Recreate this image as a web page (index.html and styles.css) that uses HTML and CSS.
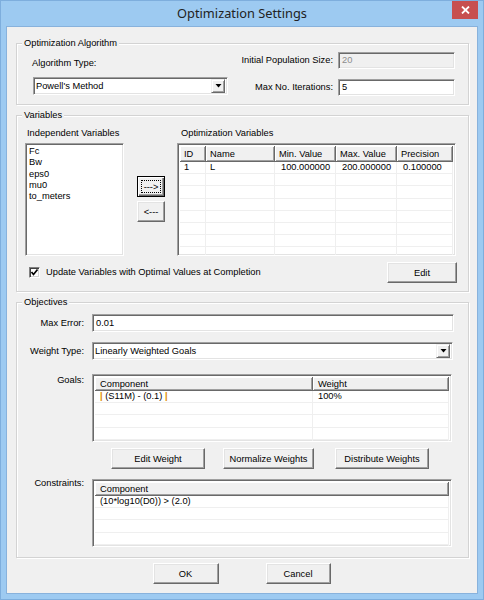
FILE: index.html
```html
<!DOCTYPE html>
<html>
<head>
<meta charset="utf-8">
<title>Optimization Settings</title>
<link rel="stylesheet" href="styles.css">
</head>
<body>
<div class="window">
  <div class="titlebar">
    <div class="title">Optimization Settings</div>
    <div class="close">
      <svg width="9" height="8" viewBox="0 0 9 8"><path d="M1 0.5 L8 7.5 M8 0.5 L1 7.5" stroke="#fff" stroke-width="1.8" fill="none"/></svg>
    </div>
  </div>
  <div class="client">
    <div class="group g-algo">
      <div class="group-title">Optimization Algorithm</div>
      <div class="algo-body">
        <div class="algo-left">
          <div class="lbl algo-type-lbl">Algorithm Type:</div>
          <div class="combo algo-combo">
            <span class="combo-text">Powell's Method</span>
            <span class="combo-btn"><svg width="7" height="4" viewBox="0 0 7 4"><polygon points="0.5,0 6.5,0 3.5,3.5" fill="#000"/></svg></span>
          </div>
        </div>
        <div class="algo-right">
          <div class="field-row"><span class="lbl">Initial Population Size:</span><div class="input disabled algo-input">20</div></div>
          <div class="field-row row2"><span class="lbl">Max No. Iterations:</span><div class="input algo-input">5</div></div>
        </div>
      </div>
    </div>

    <div class="group g-vars">
      <div class="group-title">Variables</div>
      <div class="vars-body">
        <div class="indep">
          <div class="lbl col-lbl">Independent Variables</div>
          <div class="listbox">
            <div class="li">Fc</div>
            <div class="li">Bw</div>
            <div class="li">eps0</div>
            <div class="li">mu0</div>
            <div class="li">to_meters</div>
          </div>
        </div>
        <div class="arrow-btns">
          <div class="btn arrow-btn focused"><span class="focus-rect">---&gt;</span></div>
          <div class="btn arrow-btn second">&lt;---</div>
        </div>
        <div class="optvars">
          <div class="lbl col-lbl opt-lbl">Optimization Variables</div>
          <div class="grid-table vars-table">
            <div class="thead">
              <div class="th c-id">ID</div>
              <div class="th c-name">Name</div>
              <div class="th c-min">Min. Value</div>
              <div class="th c-max">Max. Value</div>
              <div class="th c-prec">Precision</div>
            </div>
            <div class="tr">
              <div class="td c-id">1</div>
              <div class="td c-name">L</div>
              <div class="td c-min num">100.000000</div>
              <div class="td c-max num">200.000000</div>
              <div class="td c-prec num">0.100000</div>
            </div>
            <div class="tr"><div class="td c-id"></div><div class="td c-name"></div><div class="td c-min"></div><div class="td c-max"></div><div class="td c-prec"></div></div>
            <div class="tr"><div class="td c-id"></div><div class="td c-name"></div><div class="td c-min"></div><div class="td c-max"></div><div class="td c-prec"></div></div>
            <div class="tr"><div class="td c-id"></div><div class="td c-name"></div><div class="td c-min"></div><div class="td c-max"></div><div class="td c-prec"></div></div>
            <div class="tr"><div class="td c-id"></div><div class="td c-name"></div><div class="td c-min"></div><div class="td c-max"></div><div class="td c-prec"></div></div>
            <div class="tr"><div class="td c-id"></div><div class="td c-name"></div><div class="td c-min"></div><div class="td c-max"></div><div class="td c-prec"></div></div>
            <div class="tr"><div class="td c-id"></div><div class="td c-name"></div><div class="td c-min"></div><div class="td c-max"></div><div class="td c-prec"></div></div>
            <div class="tr"><div class="td c-id"></div><div class="td c-name"></div><div class="td c-min"></div><div class="td c-max"></div><div class="td c-prec"></div></div>
          </div>
        </div>
      </div>
      <div class="vars-footer">
        <div class="check">
          <span class="checkbox"><svg width="9" height="9" viewBox="0 0 9 9"><path d="M1.5 4 L3.5 6.5 L7.5 1.5" stroke="#000" stroke-width="1.7" fill="none"/></svg></span>
          <span class="check-lbl">Update Variables with Optimal Values at Completion</span>
        </div>
        <div class="btn edit-btn">Edit</div>
      </div>
    </div>

    <div class="group g-obj">
      <div class="group-title">Objectives</div>
      <div class="obj-row r-err">
        <div class="obj-lbl">Max Error:</div>
        <div class="input obj-input">0.01</div>
      </div>
      <div class="obj-row r-wt">
        <div class="obj-lbl">Weight Type:</div>
        <div class="combo obj-combo">
          <span class="combo-text">Linearly Weighted Goals</span>
          <span class="combo-btn"><svg width="7" height="4" viewBox="0 0 7 4"><polygon points="0.5,0 6.5,0 3.5,3.5" fill="#000"/></svg></span>
        </div>
      </div>
      <div class="obj-row r-goals">
        <div class="obj-lbl top-lbl">Goals:</div>
        <div class="grid-table obj-table">
          <div class="thead small">
            <div class="th c-comp">Component</div>
            <div class="th c-wt">Weight</div>
          </div>
          <div class="tr"><div class="td c-comp"><span class="pipe">|</span> (S11M) - (0.1) <span class="pipe">|</span></div><div class="td c-wt">100%</div></div>
          <div class="tr"><div class="td c-comp"></div><div class="td c-wt"></div></div>
          <div class="tr"><div class="td c-comp"></div><div class="td c-wt"></div></div>
          <div class="tr"><div class="td c-comp"></div><div class="td c-wt"></div></div>
          <div class="tr"><div class="td c-comp"></div><div class="td c-wt"></div></div>
        </div>
      </div>
      <div class="obj-row r-btns">
        <div class="obj-lbl"></div>
        <div class="weight-btns">
          <div class="btn w-edit">Edit Weight</div>
          <div class="btn w-norm">Normalize Weights</div>
          <div class="btn w-dist">Distribute Weights</div>
        </div>
      </div>
      <div class="obj-row r-cons">
        <div class="obj-lbl top-lbl cons-lbl">Constraints:</div>
        <div class="grid-table obj-table">
          <div class="thead small">
            <div class="th c-full">Component</div>
          </div>
          <div class="tr"><div class="td c-full">(10*log10(D0)) &gt; (2.0)</div></div>
          <div class="tr"><div class="td c-full"></div></div>
          <div class="tr"><div class="td c-full"></div></div>
          <div class="tr"><div class="td c-full"></div></div>
          <div class="tr"><div class="td c-full"></div></div>
        </div>
      </div>
    </div>

    <div class="dialog-btns">
      <div class="btn ok-btn">OK</div>
      <div class="btn cancel-btn">Cancel</div>
    </div>
  </div>
</div>
</body>
</html>
```

FILE: styles.css
```css
* { box-sizing: border-box; }
html, body { margin: 0; padding: 0; }
body {
  width: 484px;
  height: 600px;
  background: #9dcaf1;
  font-family: "Liberation Sans", Arial, sans-serif;
  font-size: 9.3px;
  color: #000;
  overflow: hidden;
}

.window {
  width: 484px;
  height: 600px;
  border: 1px solid #7eaedd;
  background: #9dcaf1;
  display: flex;
  flex-direction: column;
}

.titlebar {
  height: 25px;
  display: grid;
  grid-template-columns: 1fr auto 1fr;
  align-items: start;
}
.title {
  grid-column: 2;
  font-family: "Noto Sans", "Open Sans", sans-serif;
  font-size: 12.8px;
  line-height: 25px;
  color: #222;
}
.close {
  grid-column: 3;
  justify-self: end;
  margin-right: 5px;
  width: 26px;
  height: 18px;
  background: #c75050;
  display: flex;
  align-items: center;
  justify-content: center;
}

.client {
  margin: 0 5px;
  height: 568px;
  border: 1px solid #88b2dc;
  background: #f0f0f0;
  padding: 16px 8px 0 9px;
  display: flex;
  flex-direction: column;
}

.lbl { line-height: 13px; white-space: nowrap; }

/* group boxes */
.group {
  border: 1px solid #d3d3d3;
  box-shadow: inset 1px 1px 0 #fff, 1px 1px 0 #fff;
  width: 453px;
}
.group-title {
  margin: -7px 0 0 5px;
  padding: 0 2px;
  height: 13px;
  line-height: 13px;
  background: #f0f0f0;
  width: max-content;
}
.g-algo { height: 62px; }
.g-vars { height: 177px; margin-top: 10px; }
.g-obj { height: 256px; margin-top: 10px; }

/* sunken fields */
.input, .combo, .listbox, .grid-table, .checkbox {
  background: #fff;
  border: 1px solid;
  border-color: #a0a0a0 #fff #fff #a0a0a0;
  box-shadow: inset 1px 1px 0 #696969, inset -1px -1px 0 #e3e3e3;
}
.input {
  padding: 0 3px;
  line-height: 15px;
  white-space: nowrap;
}
.input.disabled { background: #f0f0f0; color: #8d8d8d; }

.combo {
  display: flex;
  align-items: center;
  padding: 2px;
  height: 18px;
}
.combo-text { flex: 1; line-height: 14px; padding-left: 0; }
.combo-btn {
  width: 14px;
  height: 14px;
  background: #f0f0f0;
  border: 1px solid;
  border-color: #f0f0f0 #696969 #696969 #f0f0f0;
  box-shadow: inset 1px 1px 0 #fff, inset -1px -1px 0 #a0a0a0;
  display: flex;
  align-items: center;
  justify-content: center;
}

/* raised buttons */
.btn {
  background: #f0f0f0;
  border: 1px solid;
  border-color: #fff #696969 #696969 #fff;
  box-shadow: inset -1px -1px 0 #a0a0a0, inset 1px 1px 0 #e3e3e3;
  height: 21px;
  display: flex;
  align-items: center;
  justify-content: center;
  white-space: nowrap;
}

/* group 1 */
.algo-body { display: flex; }
.algo-left { padding-left: 15px; }
.algo-type-lbl { margin-top: 7px; }
.algo-combo { margin-top: 7px; margin-left: 1px; width: 195px; }
.algo-right { margin-left: auto; margin-right: 13px; padding-top: 2px; }
.field-row { display: flex; align-items: center; justify-content: flex-end; }
.field-row.row2 { margin-top: 10px; }
.algo-input { width: 117px; height: 17px; margin-left: 5px; }

/* group 2 */
.vars-body { display: flex; margin-top: 5px; padding-left: 8px; }
.col-lbl { padding-left: 2px; height: 13px; }
.opt-lbl { padding-left: 4px; }
.listbox {
  width: 99px;
  height: 113px;
  margin-top: 3px;
  padding: 2px 0 0 3px;
}
.li { line-height: 11.3px; }
.arrow-btns { margin-left: 13px; padding-top: 49px; }
.arrow-btn { width: 28px; height: 21px; }
.arrow-btn.second { margin-top: 4px; }
.btn.focused {
  border-color: #000;
  box-shadow: inset 1px 1px 0 #fff, inset -1px -1px 0 #696969, inset -2px -2px 0 #a0a0a0;
}
.focus-rect {
  border: 1px dotted #000;
  width: 20px;
  height: 13px;
  display: flex;
  align-items: center;
  justify-content: center;
}
.optvars { margin-left: 12px; }
.vars-table { width: 279px; height: 113px; margin-top: 3px; }

.grid-table { padding: 2px; overflow: hidden; }
.thead { display: flex; height: 16px; }
.thead.small { height: 14px; }
.th {
  background: #f0f0f0;
  border-right: 1px solid #696969;
  border-bottom: 1px solid #696969;
  box-shadow: inset 1px 1px 0 #fff, inset -1px -1px 0 #a0a0a0;
  padding-left: 4px;
  display: flex;
  align-items: center;
  white-space: nowrap;
}
.tr { display: flex; height: 12.2px; }
.td {
  border-right: 1px solid #efefef;
  border-bottom: 1px solid #efefef;
  padding-left: 4px;
  line-height: 11px;
  white-space: nowrap;
}
.td.num { padding-left: 6px; }
.c-id { width: 26px; }
.c-name { width: 69px; }
.c-min { width: 61px; }
.c-max { width: 61px; }
.c-prec { flex: 1; }

.vars-footer {
  display: flex;
  align-items: center;
  margin-top: 6px;
  padding-left: 12px;
}
.check { display: flex; align-items: center; }
.checkbox {
  width: 11px;
  height: 11px;
  display: flex;
  align-items: center;
  justify-content: center;
  border-color: #808080 #fff #fff #808080;
  box-shadow: inset 1px 1px 0 #404040, inset -1px -1px 0 #d4d4d4;
}
.check-lbl { margin-left: 6px; line-height: 13px; }
.edit-btn { width: 70px; margin-left: auto; margin-right: 11px; }

/* group 3 */
.obj-row { display: flex; align-items: center; }
.obj-lbl { width: 75px; text-align: right; padding-right: 8px; line-height: 13px; white-space: nowrap; }
.top-lbl { align-self: flex-start; }
.cons-lbl { margin-top: -2px; }
.r-err { margin-top: 5px; }
.obj-input { width: 362px; height: 18px; line-height: 16px; }
.r-wt { margin-top: 10px; }
.obj-combo { width: 361px; }
.r-goals { margin-top: 14px; }
.obj-table { width: 360px; height: 68px; }
.c-comp { width: 218px; padding-left: 5px; }
.c-wt { flex: 1; padding-left: 5px; }
.c-full { flex: 1; padding-left: 5px; }
.pipe { color: #e08a00; font-weight: bold; }
.r-btns { margin-top: 6px; }
.weight-btns { display: flex; padding-left: 19px; }
.w-edit { width: 94px; }
.w-norm { width: 91px; margin-left: 18px; }
.w-dist { width: 94px; margin-left: 21px; }
.r-cons { margin-top: 10px; }

.dialog-btns {
  display: flex;
  justify-content: center;
  margin-top: 5px;
  padding-right: 2px;
}
.ok-btn { width: 66px; }
.cancel-btn { width: 65px; margin-left: 47px; }
```
